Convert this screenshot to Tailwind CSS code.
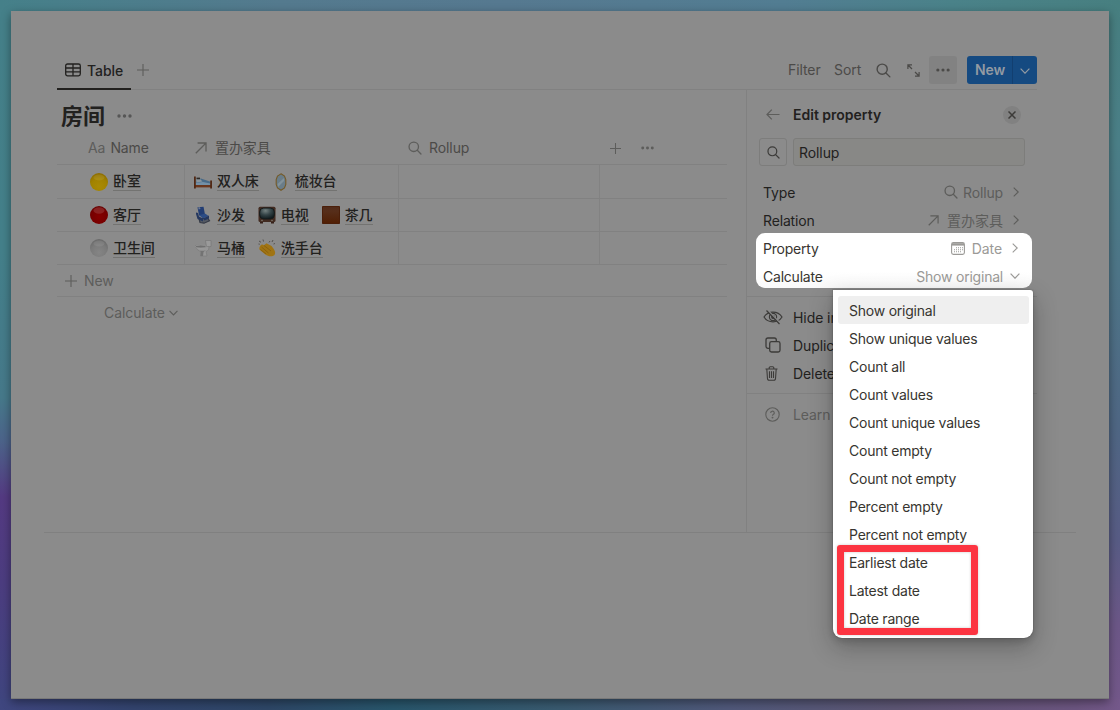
<!DOCTYPE html>
<html lang="zh">
<head>
<meta charset="utf-8">
<title>房间</title>
<script src="https://cdn.jsdelivr.net/npm/@tailwindcss/browser@4"></script>
</head>
<body class="relative w-[1120px] h-[710px] overflow-hidden p-[11px] font-['Inter','Noto_Sans_CJK_SC',sans-serif] text-[14px] leading-[20px] tracking-[-0.08px] text-[#22211e] bg-no-repeat bg-[position:top,bottom,left,right] bg-[size:100%_11px,100%_11px,11px_100%,11px_100%] bg-[image:linear-gradient(90deg,#458089,#547a8e_25%,#567990_45%,#527d92_70%,#4a8289_85%,#477f80),linear-gradient(90deg,#3f467f,#33446e_12%,#2e4767_24%,#28566c_35%,#395a70_50%,#50587a_65%,#5d5674_80%,#6c5580_96%,#74588a),linear-gradient(180deg,#458089,#44808a_35%,#46798a_56%,#4c648a_62%,#543a82_70%,#4c3d80_82%,#3f467f),linear-gradient(180deg,#477f80,#4b8088_20%,#4e7688_38%,#4f6784_60%,#585c85_76%,#6c5787_88%,#74588a)]">
<svg class="absolute h-0 w-0">
  <defs>
    <symbol id="search" viewBox="0 0 16 16"><g fill="none" stroke="currentColor" stroke-width="1.5" stroke-linecap="round"><circle cx="6.6" cy="6.6" r="5.4"/><path d="M10.6 10.6 14.8 14.8"/></g></symbol>
    <symbol id="plus" viewBox="0 0 12 12"><path d="M6 0V12M0 6H12" stroke="currentColor" stroke-width="1.1"/></symbol>
    <symbol id="dots" viewBox="0 0 15 4"><g fill="currentColor"><circle cx="2" cy="2" r="1.7"/><circle cx="7.5" cy="2" r="1.7"/><circle cx="13" cy="2" r="1.7"/></g></symbol>
    <symbol id="arrow" viewBox="0 0 12 12"><path d="M.8 11.2 11 1M2.6 1H11V9.4" fill="none" stroke="currentColor" stroke-width="1.3"/></symbol>
    <symbol id="right" viewBox="0 0 6 10"><path d="M.7.6 5.2 5 .7 9.4" fill="none" stroke="currentColor" stroke-width="1.1"/></symbol>
    <symbol id="down" viewBox="0 0 10 6"><path d="M.6.7 5 5.2 9.4.7" fill="none" stroke="currentColor" stroke-width="1.2"/></symbol>
    <radialGradient id="gy" cx=".5" cy=".75" r=".75"><stop offset="0" stop-color="#a98a04"/><stop offset=".6" stop-color="#a18200"/><stop offset="1" stop-color="#8c6c00"/></radialGradient>
    <radialGradient id="gr" cx=".5" cy=".6" r=".65"><stop offset="0" stop-color="#860000"/><stop offset=".75" stop-color="#740000"/><stop offset="1" stop-color="#5c0505"/></radialGradient>
    <radialGradient id="gw" cx=".5" cy=".75" r=".75"><stop offset="0" stop-color="#858585"/><stop offset=".6" stop-color="#7a7a7a"/><stop offset="1" stop-color="#696969"/></radialGradient>
    <linearGradient id="gb" x1="0" y1="0" x2="0" y2="1"><stop offset="0" stop-color="#502a19"/><stop offset=".25" stop-color="#562e1a"/><stop offset="1" stop-color="#511f04"/></linearGradient>
    <radialGradient id="gt" cx=".4" cy=".25" r=".75"><stop offset="0" stop-color="#738080"/><stop offset=".5" stop-color="#354447"/><stop offset="1" stop-color="#111c1f"/></radialGradient>
  </defs>
</svg>

<main class="flex h-[688px] w-[1098px] flex-col bg-[#8b8b8b] border-b border-[#787878] pt-[40px] shadow-[0_3px_9px_rgba(0,0,0,.4)]">
  <!-- view tabs and toolbar -->
  <header class="ml-[46px] flex h-[39px] w-[980px] shrink-0 justify-between border-b border-[#818181] text-[#4b4a48]">
    <div class="flex">
      <div class="flex h-[39px] w-[74px] items-center border-b-2 border-[#22211f] pl-[8px] font-medium text-[#22211f]">
        <svg class="mr-[6px] h-[14px] w-[16px] shrink-0" viewBox="0 0 16 14" fill="none" stroke="currentColor" stroke-width="1.3"><rect x=".7" y="1" width="14.6" height="11.8" rx="1.8"/><path d="M.7 5H15.300M.7 8.900H15.300M8 1V12.800"/></svg>
        <span class="pt-[3px]">Table</span>
      </div>
      <svg class="ml-[6px] mt-[13px] h-[12px] w-[12px] text-[#5d5d5b]"><use href="#plus"/></svg>
    </div>
    <div class="flex h-[38px] items-center">
      <span class="w-[46px]">Filter</span><span class="w-[42px]">Sort</span>
      <svg class="mr-[16px] h-[15px] w-[15px]"><use href="#search"/></svg>
      <svg class="mr-[9px] h-[13px] w-[13px]" viewBox="0 0 13 13" fill="none" stroke="currentColor" stroke-width="1.2"><path d="M.9 5V.9H5M1 1 5 5M12.100 8V12.100H8M12 12 8 8"/></svg>
      <div class="mr-[10px] flex h-[28px] w-[28px] items-center justify-center rounded-[3px] bg-[#828282]"><svg class="h-[4px] w-[14px]"><use href="#dots"/></svg></div>
      <div class="flex h-[28px] w-[70px] overflow-hidden rounded-[3px] bg-[#154a81] font-semibold leading-[28px] text-[#929aa3]">
        <span class="w-[46px] border-r border-[#123f70] pl-[8px]">New</span>
        <svg class="ml-[7px] mt-[12px] h-[6px] w-[10px]"><use href="#down"/></svg>
      </div>
    </div>
  </header>

  <div class="ml-[33px] flex h-[443px] w-[1032px] shrink-0 border-b border-[#808080] pl-[13px]">
    <!-- table -->
    <section class="w-[689px] shrink-0">
      <div class="flex h-[51px] items-center pl-[4px] text-[22px] font-bold leading-[28px] text-[#22211f]">房间<svg class="ml-[12px] h-[4px] w-[15px] text-[#565656]"><use href="#dots"/></svg></div>
      <div class="flex h-[24px] w-[670px] items-start border-b border-[#818181] text-[#4b4a48]">
        <div class="-mt-[3px] flex w-[138px] pl-[31px]"><span class="mr-[5px] text-[#5d5d5b]">Aa</span>Name</div>
        <div class="-mt-[3px] flex w-[213px] items-center"><svg class="mr-[8px] h-[12px] w-[12px] text-[#5d5d5b]"><use href="#arrow"/></svg>置办家具</div>
        <div class="-mt-[3px] flex w-[202px] items-center"><svg class="mr-[7px] h-[14px] w-[14px] text-[#5d5d5b]"><use href="#search"/></svg>Rollup</div>
        <svg class="mt-[2px] h-[11px] w-[11px] text-[#5d5d5b]"><use href="#plus"/></svg>
        <svg class="ml-[20px] mt-[5px] h-[4px] w-[13px] text-[#5d5d5b]"><use href="#dots"/></svg>
      </div>

      <div class="flex h-[34px] w-[670px] border-b border-[#818181] font-medium leading-[18px]">
        <div class="flex w-[128px] items-center border-r border-[#828282] pl-[33px]"><svg class="mr-[5px] h-[18px] w-[18px]" viewBox="0 0 18 18"><circle cx="9" cy="9" r="9" fill="url(#gy)"/><ellipse cx="9" cy="4.500" rx="5.500" ry="3" fill="#fff" opacity=".08"/></svg><span class="border-b border-[#737371]">卧室</span></div>
        <div class="flex w-[214px] items-center border-r border-[#828282] pl-[9px]">
          <svg class="mr-[5px] h-[18px] w-[18px]" viewBox="0 0 18 18"><path d="M2 6.500 7 5.600 16.500 8.800V12.500H2Z" fill="#486a87"/><path d="M2 6 5.500 5.600 8.500 8.500 2.500 9.500Z" fill="#8b959c"/><path d="M2 9.800 9 9 16.400 10.500V12.500H2Z" fill="#7490a6"/><path d="M1 12H17V14.400H1Z" fill="#6b361c"/><path d="M.9 3.500V15.500M17.100 7.500V15.500" stroke="#512915" stroke-width="1.800"/><path d="M2.500 4.600H6V6.300H2.500Z" fill="#2c2926"/></svg><span class="mr-[13px] border-b border-[#737371]">双人床</span>
          <svg class="mr-[5px] h-[18px] w-[18px]" viewBox="0 0 18 18"><path d="M9 .8 12.500 3 13.800 6.500V11.500L12.500 15 9 17.300 5.500 15 4.200 11.500V6.500L5.500 3Z" fill="#6a7d89" stroke="#755a27" stroke-width="1.100"/><path d="M5.500 11 12 5V8L6 14Z" fill="#82929a"/></svg><span class="border-b border-[#737371]">梳妆台</span>
        </div>
        <div class="w-[201px] border-r border-[#828282]"></div>
      </div>
      <div class="flex h-[33px] w-[670px] border-b border-[#818181] font-medium leading-[18px]">
        <div class="flex w-[128px] items-center border-r border-[#828282] pl-[33px]"><svg class="mr-[5px] h-[18px] w-[18px]" viewBox="0 0 18 18"><circle cx="9" cy="9" r="9" fill="url(#gr)"/><ellipse cx="9" cy="4.500" rx="5.500" ry="3.200" fill="#fff" opacity=".13"/></svg><span class="border-b border-[#737371]">客厅</span></div>
        <div class="flex w-[214px] items-center border-r border-[#828282] pl-[9px]">
          <svg class="mr-[5px] h-[18px] w-[18px]" viewBox="0 0 18 18"><path d="M5 12.500 6 16.500 10 17.200 15.500 14.800 14 12.500Z" fill="#555a63" stroke="#363b47" stroke-width="1.200"/><path d="M3.500 1.200 9.500.8 11 8.500 5 9.500Z" fill="#223d73"/><path d="M4.300 1.300 6 1.200 6.500 3 4.500 3.500Z" fill="#6c7891"/><path d="M5 9 11.500 7.800 14.500 10 9 12.500Z" fill="#2c4c85"/><path d="M2 6.500 4 7 5 10.500 9 12.500V15.500L3.500 13 2 8ZM9 12.500 15 9.500V12.500L10.500 14.500Z" fill="#24375f"/></svg><span class="mr-[13px] border-b border-[#737371]">沙发</span>
          <svg class="mr-[5px] h-[18px] w-[18px]" viewBox="0 0 18 18"><rect x=".5" y=".8" width="17" height="15.300" rx="1.500" fill="#422b21"/><path d="M2 16H5V17.500H2ZM13 16H16V17.500H13Z" fill="#352019"/><rect x="1.700" y="2" width="14.600" height="11" rx="4" fill="url(#gt)" stroke="#171a1a"/><circle cx="4" cy="14.500" r=".8" fill="#7a746b"/><circle cx="14" cy="14.500" r=".8" fill="#7a746b"/></svg><span class="mr-[13px] border-b border-[#737371]">电视</span>
          <svg class="mr-[5px] h-[18px] w-[18px]" viewBox="0 0 18 18"><rect width="18" height="18" rx=".8" fill="#4b1f0a"/><rect x="1" y="1" width="16" height="16" fill="url(#gb)"/></svg><span class="border-b border-[#737371]">茶几</span>
        </div>
        <div class="w-[201px] border-r border-[#828282]"></div>
      </div>
      <div class="flex h-[33px] w-[670px] border-b border-[#818181] font-medium leading-[18px]">
        <div class="flex w-[128px] items-center border-r border-[#828282] pl-[33px]"><svg class="mr-[5px] h-[18px] w-[18px]" viewBox="0 0 18 18"><circle cx="9" cy="9" r="9" fill="url(#gw)"/><ellipse cx="9" cy="4.500" rx="5.500" ry="3" fill="#fff" opacity=".08"/></svg><span class="border-b border-[#737371]">卫生间</span></div>
        <div class="flex w-[214px] items-center border-r border-[#828282] pl-[9px]">
          <svg class="mr-[5px] h-[18px] w-[18px]" viewBox="0 0 18 18"><path d="M11.500 1.500H17V7.500L12.500 8Z" fill="#9a9a9a" stroke="#747474" stroke-width=".6"/><path d="M1.500 6.500C5 5.500 10 5.800 12.500 7.500L15 7.500 14.500 11 12 12.500 13 17H6.500L7 12.500C4 12 2 9.500 1.500 6.500Z" fill="#979797" stroke="#747474" stroke-width=".5"/><ellipse cx="6.800" cy="7.500" rx="5.500" ry="1.500" fill="#6f6f6f" stroke="#9e9e9e" stroke-width=".7"/><path d="M3 10C5 12 9 12.500 12 11L9.500 13 9 17H6.500L7 12.500Z" fill="#737373"/></svg><span class="mr-[13px] border-b border-[#737371]">马桶</span>
          <svg class="mr-[5px] h-[18px] w-[18px]" viewBox="0 0 18 18"><path d="M2.500 6.500C3.500 4.800 5 5.500 6 6.200L8.500 4.200 13.500 7 15 9C16.500 11 18 13.500 16.500 16 14.500 18 10 17.500 7.500 15.500L2.500 11.500C.8 10.500 1 8.500 2.500 6.500Z" fill="#a07413"/><path d="M6 6.500 13 12M3.500 8 10.500 14M2.500 10.500 8 15" stroke="#81580b" stroke-width=".7"/><path d="M1 2 3 3.300M5 .5 5.500 2.500M.5 5 1.800 5.200M12 2 11 3.500M15 1 14 3M17 4.500 15.500 5" stroke="#4f4c48" stroke-width=".9"/></svg><span class="border-b border-[#737371]">洗手台</span>
        </div>
        <div class="w-[201px] border-r border-[#828282]"></div>
      </div>
      <div class="flex h-[32px] w-[670px] items-center border-b border-[#818181] pl-[8px] text-[#5d5d5b]"><svg class="mr-[7px] h-[12px] w-[12px]"><use href="#plus"/></svg>New</div>
      <div class="flex h-[32px] items-center pl-[47px] text-[#5d5d5b]">Calculate<svg class="ml-[4px] h-[6px] w-[9px]"><use href="#down"/></svg></div>
    </section>

    <!-- property panel -->
    <aside class="w-[291px] shrink-0 border-l border-[#818181]">
      <div class="flex h-[48px] items-center pl-[19px] pt-px font-semibold tracking-normal">
        <svg class="mr-[13px] h-[11px] w-[14px] text-[#5d5d5b]" viewBox="0 0 14 11" fill="none" stroke="currentColor" stroke-width="1.200"><path d="M13.500 5.500H1M5.800.7 1 5.500 5.800 10.300"/></svg>
        <span class="w-[210px]">Edit property</span>
        <span class="flex h-[18px] w-[18px] items-center justify-center rounded-full bg-[#818181]"><svg class="h-[8px] w-[8px] text-[#3c3b39]" viewBox="0 0 8 8"><path d="M.5.5 7.500 7.500M7.500.5.5 7.500" stroke="currentColor" stroke-width="1.500"/></svg></span>
      </div>
      <div class="flex h-[28px] gap-[6px] pl-[12px]">
        <div class="flex h-[28px] w-[28px] items-center justify-center rounded-[3px] border border-[#7d7d7c] text-[#3c3b39]"><svg class="h-[13px] w-[13px]"><use href="#search"/></svg></div>
        <div class="h-[28px] w-[232px] rounded-[3px] border border-[#7d7d7b] bg-[#888886] pl-[5px] leading-[27px]">Rollup</div>
      </div>
      <div class="mt-[12px] flex h-[28px] items-center pl-[16px] leading-[22px] tracking-[-0.15px]"><span class="grow pt-[2px]">Type</span>
        <div class="flex items-center pr-[18px] text-[#5d5d5b]"><svg class="mr-[5px] h-[14px] w-[14px]"><use href="#search"/></svg><span class="pt-[2px]">Rollup</span><svg class="ml-[10px] h-[10px] w-[6px]"><use href="#right"/></svg></div></div>
      <div class="flex h-[28px] items-center pl-[16px] tracking-[-0.15px]"><span class="grow pt-[2px]">Relation</span>
        <div class="flex items-center pr-[18px] text-[#5d5d5b]"><svg class="mr-[8px] h-[11px] w-[11px]"><use href="#arrow"/></svg><span class="pt-px tracking-normal">置办家具</span><svg class="ml-[10px] h-[10px] w-[6px]"><use href="#right"/></svg></div></div>
      <div class="-mt-px ml-[9px] h-[55px] w-[276px] rounded-[9px] bg-linear-to-b from-white from-70% to-[#fafafa] pt-px tracking-[-0.22px] text-[#373530]">
        <div class="flex h-[28px] items-center pl-[7px]"><span class="grow pt-[2px]">Property</span>
          <div class="flex items-center pr-[14px] text-[#9b9a97]"><svg class="mr-[7px] h-[13px] w-[14px]" viewBox="0 0 14 13"><rect x=".6" y=".6" width="12.800" height="11.800" rx="1.800" fill="none" stroke="currentColor" stroke-width="1.100"/><path d="M1 1.200H13V3.600H1Z" fill="currentColor"/><g fill="currentColor"><path d="M5 5.300H6V6.300H5ZM7 5.300H8V6.300H7ZM9 5.300H10V6.300H9ZM11 5.300H12V6.300H11ZM3 7.300H4V8.300H3ZM5 7.300H6V8.300H5ZM7 7.300H8V8.300H7ZM9 7.300H10V8.300H9ZM11 7.300H12V8.300H11ZM3 9.300H4V10.300H3ZM5 9.300H6V10.300H5ZM7 9.300H8V10.300H7ZM9 9.300H10V10.300H9Z"/></g></svg><span class="pt-[2px] tracking-[-0.1px]">Date</span><svg class="ml-[10px] h-[10px] w-[6px]"><use href="#right"/></svg></div></div>
        <div class="flex h-[28px] items-center pl-[7px]"><span class="grow pt-[2px]">Calculate</span>
          <div class="flex items-center pr-[12px] text-[#9b9a97]"><span class="pt-[2px]">Show original</span><svg class="ml-[7px] h-[6px] w-[10px]"><use href="#down"/></svg></div></div>
      </div>
      <div class="mt-[8px] border-t border-[#818181] pt-[6px]">
        <div class="flex h-[28px] items-center pl-[16px]"><svg class="mr-[10px] h-[16px] w-[20px] text-[#3c3b39]" viewBox="0 0 20 16" fill="none" stroke="currentColor" stroke-width="1.200"><path d="M1 8C5 1.500 15 1.500 19 8 15 14.500 5 14.500 1 8Z"/><circle cx="10" cy="8" r="3.600"/><circle cx="10" cy="8" r="1.300" fill="currentColor"/><path d="M4.500 1 17.500 14.500" stroke="#8b8b8b" stroke-width="1.600"/><path d="M3.500 1.500 16.500 15"/></svg><span class="w-[41px] overflow-hidden whitespace-nowrap pt-[2px]">Hide in</span></div>
        <div class="flex h-[28px] items-center pl-[18px]"><svg class="mr-[12px] h-[16px] w-[16px] text-[#3c3b39]" viewBox="0 0 16 16" fill="none" stroke="currentColor" stroke-width="1.300"><rect x="4.700" y="4.700" width="10.300" height="10.300" rx="1.800"/><path d="M4.700 11.300H3A2 2 0 0 1 1 9.300V3A2 2 0 0 1 3 1H9.300A2 2 0 0 1 11.300 3V4.700"/></svg><span class="w-[41px] overflow-hidden whitespace-nowrap pt-[2px]">Duplic</span></div>
        <div class="flex h-[28px] items-center pl-[18px]"><svg class="mr-[15px] h-[15px] w-[13px] text-[#3c3b39]" viewBox="0 0 13 15" fill="none" stroke="currentColor" stroke-width="1.100"><path d="M.5 3H12.500M4.200 3V1.800A1 1 0 0 1 5.200.8H7.800A1 1 0 0 1 8.800 1.800V3M1.800 3 2.500 12.700A1.500 1.500 0 0 0 4 14.200H9A1.500 1.500 0 0 0 10.500 12.700L11.200 3M4.500 5.200V12M6.500 5.200V12M8.500 5.200V12"/></svg><span class="w-[41px] overflow-hidden whitespace-nowrap pt-[2px]">Delete</span></div>
      </div>
      <div class="mt-[6px] border-t border-[#818181] pt-[6px]">
        <div class="flex h-[28px] items-center pl-[18px] text-[#5d5d5b]"><svg class="mr-[13px] h-[15px] w-[15px]" viewBox="0 0 15 15" fill="none" stroke="currentColor" stroke-width="1.100"><circle cx="7.500" cy="7.500" r="6.700"/><path d="M5.700 6A1.800 1.700 0 1 1 8.200 7.400Q7.500 7.800 7.500 8.700"/><circle cx="7.500" cy="10.600" r=".4" fill="currentColor"/></svg><span class="w-[41px] overflow-hidden whitespace-nowrap pt-[2px]">Learn</span></div>
      </div>
    </aside>
  </div>
</main>

<!-- calculation menu -->
<div class="absolute left-[833px] top-[290px] h-[348px] w-[200px] rounded-b-[9px] rounded-tr-[3px] bg-white pl-[5px] pt-[6px] text-[#373530] shadow-[0_0_1px_1px_rgba(15,15,15,.08),0_3px_6px_rgba(15,15,15,.15),0_9px_24px_rgba(15,15,15,.3)]">
  <ul class="w-[191px] leading-[30px] tracking-[-0.23px] [&>li]:h-[28px] [&>li]:pl-[11px]">
    <li class="rounded-[3px] bg-[#efefef]">Show original</li>
    <li>Show unique values</li>
    <li>Count all</li>
    <li>Count values</li>
    <li>Count unique values</li>
    <li>Count empty</li>
    <li>Count not empty</li>
    <li>Percent empty</li>
    <li>Percent not empty</li>
    <li>Earliest date</li>
    <li>Latest date</li>
    <li>Date range</li>
  </ul>
  <div class="absolute left-[4px] top-[255px] h-[90px] w-[141px] rounded-[3px] border-[7px] border-[#fc3441] shadow-[0_0_3px_rgba(0,0,0,.2),inset_0_0_3px_rgba(0,0,0,.2)]"></div>
</div>
</body>
</html>
